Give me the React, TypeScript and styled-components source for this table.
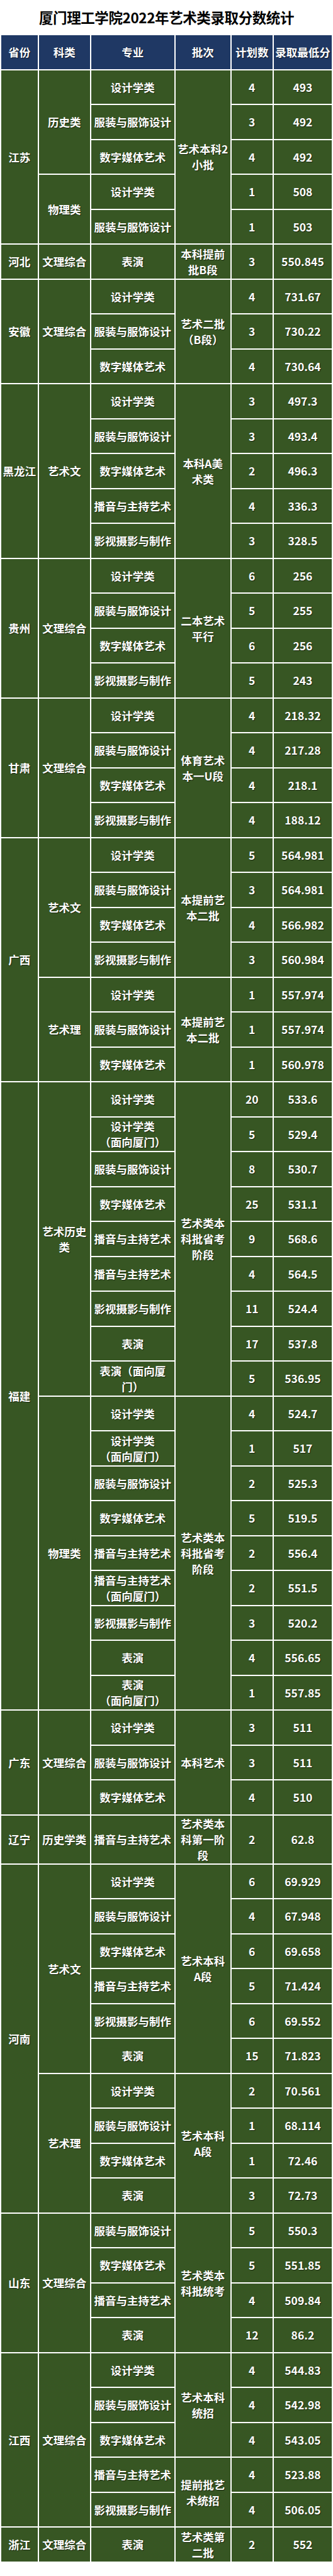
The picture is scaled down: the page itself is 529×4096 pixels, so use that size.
import styled, { createGlobalStyle } from 'styled-components';

const GlobalStyle = createGlobalStyle`
    html, body {
        margin: 0;
        padding: 0;
        background: #fff;
    }
    body {
        font-family: "Noto Sans CJK SC", "Noto Sans", sans-serif;
    }
`;

const Page = styled.div`
    width: 529px;
    overflow: hidden;
`;

const Title = styled.h1`
    height: 54.2px;
    margin: 0;
    display: flex;
    align-items: center;
    justify-content: center;
    font-size: 22.5px;
    font-weight: 700;
    color: #000;
    letter-spacing: -0.4px;
`;

const Table = styled.table`
    width: 529px;
    table-layout: fixed;
    border-collapse: separate;
    border-spacing: 2.2px;
    background: #fff;
`;

const Row = styled.tr<{ $tall?: boolean }>`
    height: ${p => (p.$tall ? 76 : 53.5)}px;
`;

const Cell = styled.td<{ $head?: boolean }>`
    padding: 0 1px;
    background: ${p => (p.$head ? '#1f3864' : '#375623')};
    color: #fff;
    font-size: 17.5px;
    font-weight: 700;
    line-height: 25px;
    text-align: center;
    vertical-align: middle;
    white-space: pre-line;
    text-shadow: 1px 1px 1px rgba(0, 0, 0, 0.55);
`;

type Span = [string, number];

interface Line {
    p?: Span;
    s?: Span;
    b?: Span;
    m: string;
    n: string;
    v: string;
    tall?: boolean;
}

const lines: Line[] = [
    // 江苏
    { p: ['江苏', 5], s: ['历史类', 3], b: ['艺术本科2\n小批', 5], m: '设计学类', n: '4', v: '493' },
    { m: '服装与服饰设计', n: '3', v: '492' },
    { m: '数字媒体艺术', n: '4', v: '492' },
    { s: ['物理类', 2], m: '设计学类', n: '1', v: '508' },
    { m: '服装与服饰设计', n: '1', v: '503' },
    // 河北
    { p: ['河北', 1], s: ['文理综合', 1], b: ['本科提前\n批B段', 1], m: '表演', n: '3', v: '550.845' },
    // 安徽
    { p: ['安徽', 3], s: ['文理综合', 3], b: ['艺术二批\n（B段）', 3], m: '设计学类', n: '4', v: '731.67' },
    { m: '服装与服饰设计', n: '3', v: '730.22' },
    { m: '数字媒体艺术', n: '4', v: '730.64' },
    // 黑龙江
    { p: ['黑龙江', 5], s: ['艺术文', 5], b: ['本科A美\n术类', 5], m: '设计学类', n: '3', v: '497.3' },
    { m: '服装与服饰设计', n: '3', v: '493.4' },
    { m: '数字媒体艺术', n: '2', v: '496.3' },
    { m: '播音与主持艺术', n: '4', v: '336.3' },
    { m: '影视摄影与制作', n: '3', v: '328.5' },
    // 贵州
    { p: ['贵州', 4], s: ['文理综合', 4], b: ['二本艺术\n平行', 4], m: '设计学类', n: '6', v: '256' },
    { m: '服装与服饰设计', n: '5', v: '255' },
    { m: '数字媒体艺术', n: '6', v: '256' },
    { m: '影视摄影与制作', n: '5', v: '243' },
    // 甘肃
    { p: ['甘肃', 4], s: ['文理综合', 4], b: ['体育艺术\n本一U段', 4], m: '设计学类', n: '4', v: '218.32' },
    { m: '服装与服饰设计', n: '4', v: '217.28' },
    { m: '数字媒体艺术', n: '4', v: '218.1' },
    { m: '影视摄影与制作', n: '4', v: '188.12' },
    // 广西
    { p: ['广西', 7], s: ['艺术文', 4], b: ['本提前艺\n本二批', 4], m: '设计学类', n: '5', v: '564.981' },
    { m: '服装与服饰设计', n: '3', v: '564.981' },
    { m: '数字媒体艺术', n: '4', v: '566.982' },
    { m: '影视摄影与制作', n: '3', v: '560.984' },
    { s: ['艺术理', 3], b: ['本提前艺\n本二批', 3], m: '设计学类', n: '1', v: '557.974' },
    { m: '服装与服饰设计', n: '1', v: '557.974' },
    { m: '数字媒体艺术', n: '1', v: '560.978' },
    // 福建
    { p: ['福建', 18], s: ['艺术历史\n类', 9], b: ['艺术类本\n科批省考\n阶段', 9], m: '设计学类', n: '20', v: '533.6' },
    { m: '设计学类\n（面向厦门）', n: '5', v: '529.4' },
    { m: '服装与服饰设计', n: '8', v: '530.7' },
    { m: '数字媒体艺术', n: '25', v: '531.1' },
    { m: '播音与主持艺术', n: '9', v: '568.6' },
    { m: '播音与主持艺术', n: '4', v: '564.5' },
    { m: '影视摄影与制作', n: '11', v: '524.4' },
    { m: '表演', n: '17', v: '537.8' },
    { m: '表演（面向厦\n门）', n: '5', v: '536.95' },
    { s: ['物理类', 9], b: ['艺术类本\n科批省考\n阶段', 9], m: '设计学类', n: '4', v: '524.7' },
    { m: '设计学类\n（面向厦门）', n: '1', v: '517' },
    { m: '服装与服饰设计', n: '2', v: '525.3' },
    { m: '数字媒体艺术', n: '5', v: '519.5' },
    { m: '播音与主持艺术', n: '2', v: '556.4' },
    { m: '播音与主持艺术\n（面向厦门）', n: '2', v: '551.5' },
    { m: '影视摄影与制作', n: '3', v: '520.2' },
    { m: '表演', n: '4', v: '556.65' },
    { m: '表演\n（面向厦门）', n: '1', v: '557.85' },
    // 广东
    { p: ['广东', 3], s: ['文理综合', 3], b: ['本科艺术', 3], m: '设计学类', n: '3', v: '511' },
    { m: '服装与服饰设计', n: '3', v: '511' },
    { m: '数字媒体艺术', n: '4', v: '510' },
    // 辽宁
    { p: ['辽宁', 1], s: ['历史学类', 1], b: ['艺术类本\n科第一阶\n段', 1], m: '播音与主持艺术', n: '2', v: '62.8', tall: true },
    // 河南
    { p: ['河南', 10], s: ['艺术文', 6], b: ['艺术本科\nA段', 6], m: '设计学类', n: '6', v: '69.929' },
    { m: '服装与服饰设计', n: '4', v: '67.948' },
    { m: '数字媒体艺术', n: '6', v: '69.658' },
    { m: '播音与主持艺术', n: '5', v: '71.424' },
    { m: '影视摄影与制作', n: '6', v: '69.552' },
    { m: '表演', n: '15', v: '71.823' },
    { s: ['艺术理', 4], b: ['艺术本科\nA段', 4], m: '设计学类', n: '2', v: '70.561' },
    { m: '服装与服饰设计', n: '1', v: '68.114' },
    { m: '数字媒体艺术', n: '1', v: '72.46' },
    { m: '表演', n: '3', v: '72.73' },
    // 山东
    { p: ['山东', 4], s: ['文理综合', 4], b: ['艺术类本\n科批统考', 4], m: '服装与服饰设计', n: '5', v: '550.3' },
    { m: '数字媒体艺术', n: '5', v: '551.85' },
    { m: '播音与主持艺术', n: '4', v: '509.84' },
    { m: '表演', n: '12', v: '86.2' },
    // 江西
    { p: ['江西', 5], s: ['文理综合', 5], b: ['艺术本科\n统招', 3], m: '设计学类', n: '4', v: '544.83' },
    { m: '服装与服饰设计', n: '4', v: '542.98' },
    { m: '数字媒体艺术', n: '4', v: '543.05' },
    { b: ['提前批艺\n术统招', 2], m: '播音与主持艺术', n: '4', v: '523.88' },
    { m: '影视摄影与制作', n: '4', v: '506.05' },
    // 浙江
    { p: ['浙江', 1], s: ['文理综合', 1], b: ['艺术类第\n二批', 1], m: '表演', n: '2', v: '552' },
];

const headers = ['省份', '科类', '专业', '批次', '计划数', '录取最低分'];
const widths = [57.5, 81, 131.6, 86.6, 65, 91.9];

function SpanCell({ span }: { span?: Span }) {
    if (!span) return null;
    return <Cell rowSpan={span[1]}>{span[0]}</Cell>;
}

export default function App() {
    return (
        <Page>
            <GlobalStyle />
            <Title>厦门理工学院2022年艺术类录取分数统计</Title>
            <Table>
                <colgroup>
                    {widths.map((w, i) => <col key={i} style={{ width: w }} />)}
                </colgroup>
                <thead>
                    <Row>
                        {headers.map(h => <Cell as="th" $head key={h}>{h}</Cell>)}
                    </Row>
                </thead>
                <tbody>
                    {lines.map((l, i) => (
                        <Row key={i} $tall={l.tall}>
                            <SpanCell span={l.p} />
                            <SpanCell span={l.s} />
                            <Cell>{l.m}</Cell>
                            <SpanCell span={l.b} />
                            <Cell>{l.n}</Cell>
                            <Cell>{l.v}</Cell>
                        </Row>
                    ))}
                </tbody>
            </Table>
        </Page>
    );
}
